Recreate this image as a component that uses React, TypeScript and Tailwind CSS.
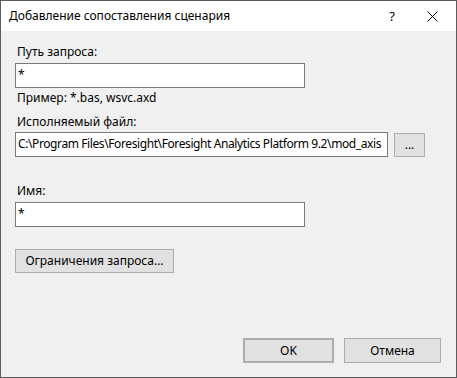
import React from 'react';

const font = { fontFamily: '"Noto Sans", "Liberation Sans", sans-serif' };

const TextBox: React.FC<{ value: string; className?: string }> = ({ value, className }) => (
  <div
    className={`h-[25px] border border-[#7a7a7a] bg-white pl-[2px] pt-[3px] text-[12px] leading-[16px] overflow-hidden whitespace-nowrap ${className ?? ''}`}
  >
    {value}
  </div>
);

const Btn: React.FC<{ children: React.ReactNode; className?: string }> = ({ children, className }) => (
  <div
    className={`flex items-center justify-center bg-[#e1e1e1] border border-[#adadad] text-[12px] leading-[16px] ${className ?? ''}`}
  >
    {children}
  </div>
);

export default function App() {
  return (
    <div
      style={font}
      className="w-[457px] h-[378px] border border-[#5c5c5c] bg-[#f0f0f0] flex flex-col text-black"
    >
      {/* title bar */}
      <div className="h-[30px] bg-white flex items-center shrink-0">
        <span className="pl-[8px] text-[12px] leading-[16px]">Добавление сопоставления сценария</span>
        <span className="ml-auto mr-[32px] text-[13px] leading-[16px]">?</span>
        <svg width="11" height="11" viewBox="0 0 11 11" className="mr-[18px]">
          <path d="M0.5 0.5 L10.5 10.5 M10.5 0.5 L0.5 10.5" stroke="#000" strokeWidth="1" />
        </svg>
      </div>

      {/* body */}
      <div className="flex-1 flex flex-col pl-[14px] pt-[13px] pr-[14px] pb-[14px] text-[12px] leading-[16px]">
        <div className="pl-[2px]">Путь запроса:</div>
        <TextBox value="*" className="mt-[3px] w-[290px]" />
        <div className="pl-[2px] mt-[2px]">Пример: *.bas, wsvc.axd</div>

        <div className="pl-[2px] mt-[8px]">Исполняемый файл:</div>
        <div className="flex items-start mt-[2px]">
          <TextBox
            value="C:\Program Files\Foresight\Foresight Analytics Platform 9.2\mod_axis"
            className="w-[373px] shrink-0 tracking-[-0.4px]"
          />
          <Btn className="ml-[6px] mt-[1px] w-[31px] h-[24px] shrink-0">...</Btn>
        </div>

        <div className="pl-[2px] mt-[26px]">Имя:</div>
        <TextBox value="*" className="mt-[3px] w-[290px]" />

        <Btn className="mt-[22px] w-[159px] h-[24px]">Ограничения запроса...</Btn>

        <div className="mt-auto flex justify-end gap-[10px] pr-[1px]">
          <Btn className="w-[91px] h-[25px] border-2 border-[#0078d7]">OK</Btn>
          <Btn className="w-[97px] h-[25px]">Отмена</Btn>
        </div>
      </div>
    </div>
  );
}
